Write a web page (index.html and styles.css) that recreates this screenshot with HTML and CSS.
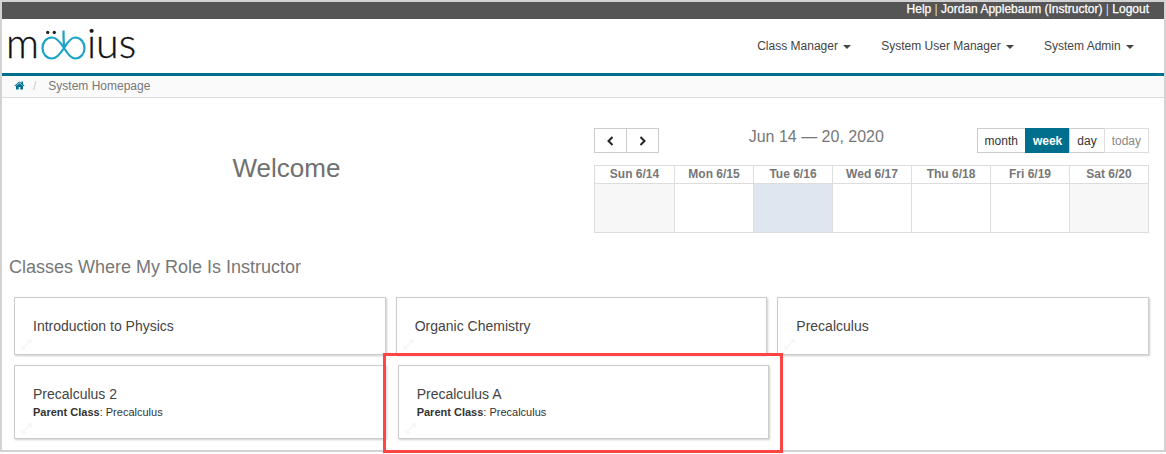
FILE: index.html
```html
<!DOCTYPE html>
<html lang="en">
<head>
<meta charset="utf-8">
<title>System Homepage</title>
<link rel="stylesheet" href="styles.css">
</head>
<body>
<div class="frame">
  <div class="topbar"><a>Help</a> <span class="sep">|</span> <a>Jordan Applebaum (Instructor)</a> <span class="sep">|</span> <a>Logout</a></div>
  <header class="nav">
    <svg class="logo" width="128" height="36" viewBox="0 0 128 36" aria-label="möbius">
      <text class="logo-text" x="-2" y="30">m</text>
      <circle class="dot" cx="39.700" cy="4.400" r="1.700"/>
      <circle class="dot" cx="46.300" cy="4.400" r="1.700"/>
      <path class="mark" d="M56 20 C52 13.500 48.500 9.500 44 9.500 C38 9.500 34.500 14.500 34.500 20 C34.500 25.500 38 30.500 44 30.500 C48.500 30.500 52 26.500 56 20 C60 13.500 63.500 9.500 67 9.500 C73 9.500 76.500 14.500 76.500 20 C76.500 25.500 73 30.500 67 30.500 C63 30.500 60 26.500 56 20 Z"/>
      <path class="mark" d="M55.500 2.500 C55.500 9 55.500 14 56.300 20"/>
      <text class="logo-text" x="79" y="30">ius</text>
    </svg>
    <nav class="menu">
      <a class="menu-item">Class Manager <i class="caret"></i></a>
      <a class="menu-item">System User Manager <i class="caret"></i></a>
      <a class="menu-item">System Admin <i class="caret"></i></a>
    </nav>
  </header>
  <div class="crumbs">
    <svg class="home" width="11" height="11" viewBox="0 0 1664 1792"><path d="M1408 992v480q0 26-19 45t-45 19h-384v-384h-256v384h-384q-26 0-45-19t-19-45v-480q0-1 .5-3t.5-3l575-474 575 474q1 2 1 6zm223-69l-62 74q-8 9-21 11h-3q-13 0-21-7l-692-577-692 577q-12 8-24 7-13-2-21-11l-62-74q-8-10-7-23.500t11-21.500l719-599q32-26 76-26t76 26l244 204v-195q0-14 9-23t23-9h192q14 0 23 9t9 23v408l219 182q10 8 11 21.500t-7 23.500z"/></svg>
    <span class="slash">/</span>
    <span>System Homepage</span>
  </div>
  <main class="content">
    <section class="top">
      <div class="welcome"><h1>Welcome</h1></div>
      <div class="calendar">
        <div class="toolbar">
          <div class="btns">
            <button class="btn arrow"><svg width="9" height="12" viewBox="0 0 9 12"><path d="M6.500 2 2.500 6 6.500 10"/></svg></button>
            <button class="btn arrow"><svg width="9" height="12" viewBox="0 0 9 12"><path d="M2.500 2 6.500 6 2.500 10"/></svg></button>
          </div>
          <h2 class="range">Jun 14 — 20, 2020</h2>
          <div class="btns">
            <button class="btn">month</button>
            <button class="btn active">week</button>
            <button class="btn">day</button>
            <button class="btn muted">today</button>
          </div>
        </div>
        <div class="week">
          <div class="head">Sun 6/14</div><div class="head">Mon 6/15</div><div class="head">Tue 6/16</div><div class="head">Wed 6/17</div><div class="head">Thu 6/18</div><div class="head">Fri 6/19</div><div class="head">Sat 6/20</div>
          <div class="day off"></div><div class="day"></div><div class="day today"></div><div class="day"></div><div class="day"></div><div class="day"></div><div class="day off"></div>
        </div>
      </div>
    </section>
    <h3 class="classes-title">Classes Where My Role Is Instructor</h3>
    <section class="cards">
      <article class="card"><div class="name">Introduction to Physics</div><svg class="grip" width="11" height="11" viewBox="0 0 11 11"><path d="M1 10 10 1M6.500 1H10V4.500M1 6.500V10H4.500"/></svg></article>
      <article class="card"><div class="name">Organic Chemistry</div><svg class="grip" width="11" height="11" viewBox="0 0 11 11"><path d="M1 10 10 1M6.500 1H10V4.500M1 6.500V10H4.500"/></svg></article>
      <article class="card"><div class="name">Precalculus</div><svg class="grip" width="11" height="11" viewBox="0 0 11 11"><path d="M1 10 10 1M6.500 1H10V4.500M1 6.500V10H4.500"/></svg></article>
      <article class="card tall"><div class="name">Precalculus 2</div><div class="parent"><b>Parent Class</b>: Precalculus</div><svg class="grip" width="11" height="11" viewBox="0 0 11 11"><path d="M1 10 10 1M6.500 1H10V4.500M1 6.500V10H4.500"/></svg></article>
      <article class="card tall nudged"><div class="name">Precalculus A</div><div class="parent"><b>Parent Class</b>: Precalculus</div><svg class="grip" width="11" height="11" viewBox="0 0 11 11"><path d="M1 10 10 1M6.500 1H10V4.500M1 6.500V10H4.500"/></svg></article>
    </section>
  </main>
</div>
<div class="callout"></div>
</body>
</html>
```
FILE: styles.css
```css
* { box-sizing: border-box; }
html, body { margin: 0; height: 454px; overflow: hidden; background: #fff; }
body { position: relative; font-family: "Liberation Sans", Arial, sans-serif; color: #666; }
.frame { height: 452px; border: 2px solid #d2d2d2; display: flex; flex-direction: column; }
.topbar { height: 17px; background: #555; color: #fff; font-size: 12px; line-height: 15px; text-align: right; padding-right: 15px; -webkit-text-stroke: 0.25px #fff; }
.topbar .sep { -webkit-text-stroke: 0; color: #ddd; }
.nav { height: 57px; border-bottom: 3px solid #006f8e; display: flex; align-items: flex-start; justify-content: space-between; padding: 0 30px 0 6px; }
.logo { margin-top: 9px; }
.logo-text { font-family: Lato, sans-serif; font-weight: 300; font-size: 41px; fill: #111; stroke: #111; stroke-width: 0.3px; }
.dot { fill: #222; }
.mark { fill: none; stroke: #1ba3c6; stroke-width: 2.200; }
.menu { display: flex; gap: 30px; padding-top: 20px; font-size: 12px; line-height: 15px; color: #444; }
.menu-item { white-space: nowrap; }
.caret { display: inline-block; width: 0; height: 0; margin-left: 2px; vertical-align: middle; border-top: 4px solid #444; border-left: 4px solid transparent; border-right: 4px solid transparent; }
.crumbs { height: 22px; background: #fafafa; border-bottom: 1px solid #ddd; display: flex; align-items: center; padding: 0 0 2px 12px; font-size: 12px; color: #777; }
.home { fill: #006f8e; }
.slash { color: #ccc; margin: 0 12px 0 8px; }
.content { flex: 1; padding: 0 15px 0 7px; }
.top { display: flex; justify-content: space-between; }
.welcome { width: 555px; padding-top: 55px; text-align: center; }
.welcome h1 { margin: 0; font-size: 26px; line-height: 30px; font-weight: 400; color: #707070; }
.calendar { width: 555px; padding-top: 30px; }
.toolbar { display: flex; justify-content: space-between; align-items: flex-start; height: 37px; }
.btns { display: flex; }
.btn { height: 25px; padding: 0 7px; background: #fff; border: 1px solid #ccc; margin-left: -1px; font: 12px/1 "Liberation Sans", Arial, sans-serif; color: #333; }
.btn:first-child { margin-left: 0; }
.btn.arrow { width: 33px; padding: 0; display: flex; align-items: center; justify-content: center; }
.arrow path { fill: none; stroke: #222; stroke-width: 2; }
.btn.active { background: #006f8e; border-color: #006f8e; color: #fff; font-weight: 700; }
.btn.muted { color: #888; border-color: #ddd; }
.range { margin: -1px 0 0 -3px; font-size: 16px; line-height: 20px; font-weight: 400; color: #777; }
.week { display: grid; grid-template-columns: 80px repeat(6, 79px); border-top: 1px solid #ddd; border-left: 1px solid #ddd; }
.head, .day { border-right: 1px solid #ddd; border-bottom: 1px solid #ddd; }
.head { height: 18px; text-align: center; font-size: 12px; line-height: 16px; font-weight: 700; color: #777; }
.day { height: 49px; }
.day.off { background: #f7f7f7; }
.day.today { background: #dfe6ef; }
.classes-title { margin: 24px 0 0; font-size: 18px; line-height: 20px; font-weight: 400; color: #777; }
.cards { display: grid; grid-template-columns: repeat(3, 1fr); gap: 10px; margin: 20px 0 0 5px; }
.card { position: relative; height: 58px; background: #fff; border: 1px solid #ccc; box-shadow: 1px 1px 2px rgba(0,0,0,.2); padding: 20px 18px 0; }
.card.tall { height: 74px; }
.card.nudged { margin: 0 -2px 0 2px; }
.name { font-size: 14px; line-height: 17px; color: #444; }
.parent { margin-top: 3px; font-size: 11px; line-height: 13px; color: #333; }
.grip { position: absolute; left: 6px; bottom: 4px; }
.grip path { stroke: #f6f6f6; stroke-width: 1.500; fill: none; }
.callout { position: absolute; left: 383px; top: 353px; width: 400px; height: 100px; border: 3px solid #f44; }
```
